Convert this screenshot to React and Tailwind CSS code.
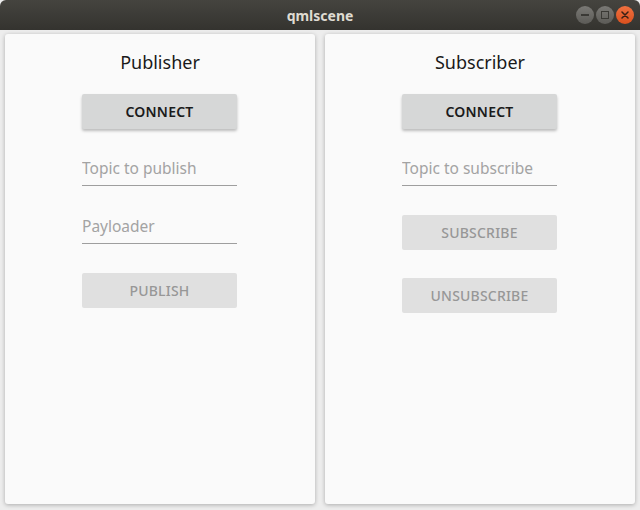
export default function App() {
  return (
    <div className="w-[640px] h-[510px] flex flex-col bg-[#ededed] overflow-hidden" style={{ fontFamily: '"Noto Sans", sans-serif' }}>
      {/* title bar */}
      <div className="h-[30px] shrink-0 relative flex items-center justify-center bg-gradient-to-b from-[#45443f] to-[#34332f] rounded-t-[6px]">
        <span className="text-[14px] font-bold text-[#dfdbd2]">qmlscene</span>
        <div className="absolute right-[6px] top-[6px] flex gap-[2px]">
          <div className="w-[18px] h-[18px] rounded-full bg-gradient-to-b from-[#7a7975] to-[#5c5b57] flex items-center justify-center">
            <div className="w-[8px] h-[2px] bg-[#3a3935]" />
          </div>
          <div className="w-[18px] h-[18px] rounded-full bg-gradient-to-b from-[#7a7975] to-[#5c5b57] flex items-center justify-center">
            <div className="w-[8px] h-[8px] border-[1.5px] border-[#3a3935]" />
          </div>
          <div className="w-[18px] h-[18px] rounded-full bg-gradient-to-b from-[#f0703f] to-[#d9501d] flex items-center justify-center">
            <svg width="8" height="8" viewBox="0 0 8 8">
              <path d="M1 1L7 7M7 1L1 7" stroke="#3a2015" strokeWidth="1.5" strokeLinecap="round" />
            </svg>
          </div>
        </div>
      </div>

      <div className="flex-1 flex gap-[10px] pl-[5px] pr-[5px] pt-[4px] pb-[6px]">
        <Panel title="Publisher">
          <Button primary>CONNECT</Button>
          <Field className="mt-[21px]" placeholder="Topic to publish" />
          <Field className="mt-[22px]" placeholder="Payloader" />
          <Button className="mt-[29px]">PUBLISH</Button>
        </Panel>
        <Panel title="Subscriber">
          <Button primary>CONNECT</Button>
          <Field className="mt-[21px]" placeholder="Topic to subscribe" />
          <Button className="mt-[29px]">SUBSCRIBE</Button>
          <Button className="mt-[28px]">UNSUBSCRIBE</Button>
        </Panel>
      </div>
    </div>
  );
}

function Panel({ title, children }) {
  return (
    <div className="w-[310px] bg-[#fafafa] rounded-[3px] shadow-[0_1px_4px_rgba(0,0,0,0.28)] flex flex-col items-center">
      <div className="mt-[16px] h-[24px] text-[18px] leading-[24px] text-[#1a1a1a]">{title}</div>
      <div className="mt-[20px] mr-[1px] flex flex-col items-center">{children}</div>
    </div>
  );
}

function Button({ primary, className = "", children }) {
  return (
    <button
      className={
        "w-[155px] h-[35px] rounded-[2px] text-[14px] tracking-[0.2px] " +
        (primary
          ? "bg-[#d6d7d7] text-[#1b1b1b] font-semibold shadow-[0_2px_3px_rgba(0,0,0,0.25)] "
          : "bg-[#e0e0e0] text-[#979797] font-medium ") +
        className
      }
    >
      {children}
    </button>
  );
}

function Field({ placeholder, className = "" }) {
  return (
    <input
      placeholder={placeholder}
      className={
        "w-[155px] h-[36px] border-b border-[#9e9e9e] bg-transparent text-[15.5px] outline-none placeholder:text-[#a3a3a3] " +
        className
      }
    />
  );
}
